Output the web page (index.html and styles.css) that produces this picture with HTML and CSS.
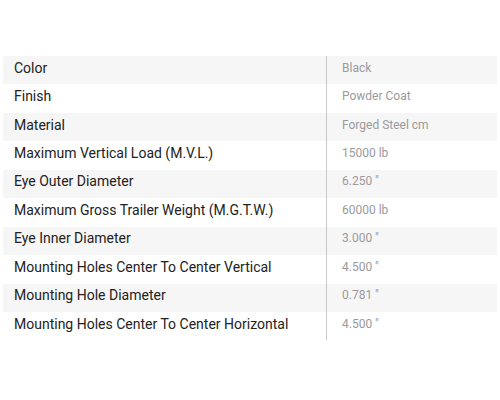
FILE: index.html
```html
<!DOCTYPE html>
<html>
<head>
<meta charset="utf-8">
<link rel="stylesheet" href="styles.css">
</head>
<body>
<div class="wrap">
  <table class="specs">
    <tr><td class="k">Color</td><td class="v">Black</td></tr>
    <tr><td class="k">Finish</td><td class="v">Powder Coat</td></tr>
    <tr><td class="k">Material</td><td class="v">Forged Steel cm</td></tr>
    <tr><td class="k">Maximum Vertical Load (M.V.L.)</td><td class="v">15000 lb</td></tr>
    <tr><td class="k">Eye Outer Diameter</td><td class="v">6.250 "</td></tr>
    <tr><td class="k">Maximum Gross Trailer Weight (M.G.T.W.)</td><td class="v">60000 lb</td></tr>
    <tr><td class="k">Eye Inner Diameter</td><td class="v">3.000 "</td></tr>
    <tr><td class="k">Mounting Holes Center To Center Vertical</td><td class="v">4.500 "</td></tr>
    <tr><td class="k">Mounting Hole Diameter</td><td class="v">0.781 "</td></tr>
    <tr><td class="k">Mounting Holes Center To Center Horizontal</td><td class="v">4.500 "</td></tr>
  </table>
</div>
</body>
</html>
```
FILE: styles.css
```css
html, body {
  margin: 0;
  padding: 0;
  background: #fff;
}
.wrap {
  padding: 56px 3px 0 3px;
}
.specs {
  width: 100%;
  border-collapse: collapse;
  font-family: Roboto, "Liberation Sans", sans-serif;
}
.specs tr {
  height: 28.45px;
}
.specs tr:nth-child(odd) {
  background: #f6f6f6;
}
.specs td {
  padding: 0 0 5px 0;
  vertical-align: middle;
}
.k {
  width: 312px;
  padding-left: 11px !important;
  font-size: 14px;
  color: #222;
  border-right: 1px solid #c8c8c8;
  white-space: nowrap;
}
.v {
  padding-left: 15px !important;
  font-size: 12px;
  color: #9a9a9a;
}
```
